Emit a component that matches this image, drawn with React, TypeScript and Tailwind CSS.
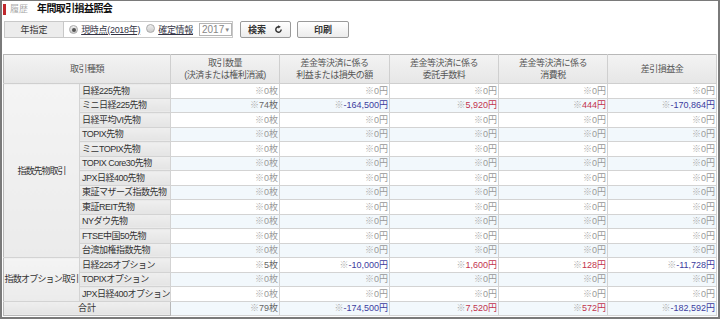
import React from "react";

type Amt = { v: string; c?: "blue" | "red" };

type Row = {
  name: string;
  qty: string;
  pl: Amt;
  fee: Amt;
  tax: Amt;
  net: Amt;
};

const zero: Amt = { v: "0" };

const zeroRow = (name: string): Row => ({
  name,
  qty: "0",
  pl: zero,
  fee: zero,
  tax: zero,
  net: zero,
});

const futures: Row[] = [
  zeroRow("日経225先物"),
  {
    name: "ミニ日経225先物",
    qty: "74",
    pl: { v: "-164,500", c: "blue" },
    fee: { v: "5,920", c: "red" },
    tax: { v: "444", c: "red" },
    net: { v: "-170,864", c: "blue" },
  },
  zeroRow("日経平均VI先物"),
  zeroRow("TOPIX先物"),
  zeroRow("ミニTOPIX先物"),
  zeroRow("TOPIX Core30先物"),
  zeroRow("JPX日経400先物"),
  zeroRow("東証マザーズ指数先物"),
  zeroRow("東証REIT先物"),
  zeroRow("NYダウ先物"),
  zeroRow("FTSE中国50先物"),
  zeroRow("台湾加権指数先物"),
];

const options: Row[] = [
  {
    name: "日経225オプション",
    qty: "5",
    pl: { v: "-10,000", c: "blue" },
    fee: { v: "1,600", c: "red" },
    tax: { v: "128", c: "red" },
    net: { v: "-11,728", c: "blue" },
  },
  zeroRow("TOPIXオプション"),
  zeroRow("JPX日経400オプション"),
];

const total: Row = {
  name: "合計",
  qty: "79",
  pl: { v: "-174,500", c: "blue" },
  fee: { v: "7,520", c: "red" },
  tax: { v: "572", c: "red" },
  net: { v: "-182,592", c: "blue" },
};

const Qty = ({ v }: { v: string }) => (
  <span className={v === "0" ? "text-[#999]" : "text-[#666]"}>
    <span className="text-[#aaa]">※</span>
    {v}枚
  </span>
);

const Yen = ({ a }: { a: Amt }) => {
  const color =
    a.c === "blue" ? "text-[#3b3b9e]" : a.c === "red" ? "text-[#c2334d]" : "text-[#999]";
  return (
    <span className={color}>
      <span className="text-[#aaa]">※</span>
      {a.v}円
    </span>
  );
};

const numCell = "border-r border-b border-[#d3d3d3] pr-[1px] text-right";
const nameCell =
  "overflow-hidden border-r border-b border-[#d3d3d3] bg-gradient-to-b from-[#efefef] to-[#e4e4e4] pl-[2px] text-left tracking-[-0.5px] text-[#333]";
const headCell = "border-r border-b border-[#cfcfcf] font-normal";

const DataCells = ({ r, i }: { r: Row; i: number }) => {
  const bg = i % 2 === 1 ? "bg-[#f2f8fc]" : "bg-white";
  return (
    <>
      <td className={`${numCell} ${bg}`}>
        <Qty v={r.qty} />
      </td>
      <td className={`${numCell} ${bg}`}>
        <Yen a={r.pl} />
      </td>
      <td className={`${numCell} ${bg}`}>
        <Yen a={r.fee} />
      </td>
      <td className={`${numCell} ${bg}`}>
        <Yen a={r.tax} />
      </td>
      <td className={`${numCell} ${bg}`}>
        <Yen a={r.net} />
      </td>
    </>
  );
};

const Radio = ({ on }: { on?: boolean }) => (
  <span className="inline-flex h-[9px] w-[9px] shrink-0 items-center justify-center rounded-full border border-[#aaa] bg-gradient-to-b from-[#eee] to-[#ccc]">
    {on && <span className="h-[4px] w-[4px] rounded-full bg-[#555]" />}
  </span>
);

export default function App() {
  return (
    <div
      className="h-[319px] w-[720px] overflow-hidden whitespace-nowrap border-x-2 border-t border-b-2 border-[#7a7a7a] bg-white text-[9px] leading-[12px]"
      style={{ fontFamily: '"Liberation Sans", "Noto Sans CJK JP", sans-serif' }}
    >
      {/* title */}
      <div className="flex h-[14px] items-center pl-[1px] pt-[2px]">
        <span className="h-[11px] w-[3px] bg-[#c0282d]" />
        <span className="ml-[4px] text-[#aaa]">履歴</span>
        <span className="ml-[9px] text-[10px] font-bold tracking-[-0.6px] text-[#111]">年間取引損益照会</span>
      </div>

      {/* filter */}
      <div className="mt-[6px] flex h-[17px] items-stretch pl-[2px]">
        <div className="flex w-[229px] items-stretch border border-[#c8c8c8]">
          <div className="flex w-[66px] items-center justify-center border-r border-[#c8c8c8] bg-[#ececec] text-[#333]">
            年指定
          </div>
          <div className="flex flex-1 items-center pl-[5px] tracking-[-0.3px] text-[#334]">
            <Radio on />
            <span className="ml-[3px] underline">現時点(2018年)</span>
            <span className="ml-[6px]">
              <Radio />
            </span>
            <span className="ml-[3px] underline">確定情報</span>
            <span className="ml-[6px] flex h-[13px] w-[33px] items-center justify-between border border-[#b5b5b5] pl-[2px] pr-[2px] tracking-normal text-[#888]">
              <span className="text-[10px]">2017</span>
              <span className="text-[6px]">▼</span>
            </span>
          </div>
        </div>
        <button className="ml-[7px] flex w-[51px] items-center justify-center gap-[8px] rounded-[2px] border border-[#9a9a9a] bg-gradient-to-b from-white to-[#ececec] font-bold text-[#333]">
          <span>検索</span>
          <svg width="9" height="9" viewBox="0 0 10 10">
            <path d="M8 5 A3 3 0 1 1 5.5 2" fill="none" stroke="#333" strokeWidth="1.6" />
            <path d="M4.5 0.3 L7.6 2 L4.8 3.9 Z" fill="#333" />
          </svg>
        </button>
        <button className="ml-[6px] flex w-[52px] items-center justify-center rounded-[2px] border border-[#9a9a9a] bg-gradient-to-b from-white to-[#ececec] font-bold text-[#333]">
          印刷
        </button>
      </div>

      {/* table */}
      <div className="mt-[16px] pl-[1px]">
        <table className="w-[713px] table-fixed border-collapse border-l border-t border-[#b8b8b8]">
          <colgroup>
            <col className="w-[76px]" />
            <col className="w-[91px]" />
            <col className="w-[109px]" />
            <col className="w-[110px]" />
            <col className="w-[109px]" />
            <col className="w-[109px]" />
            <col className="w-[109px]" />
          </colgroup>
          <thead>
            <tr className="h-[29px] bg-gradient-to-b from-[#f3f3f3] to-[#e6e6e6] text-center tracking-[-0.5px] text-[#555]">
              <th colSpan={2} className={headCell}>
                取引種類
              </th>
              <th className={headCell}>
                取引数量
                <br />
                (決済または権利消滅)
              </th>
              <th className={headCell}>
                差金等決済に係る
                <br />
                利益または損失の額
              </th>
              <th className={headCell}>
                差金等決済に係る
                <br />
                委託手数料
              </th>
              <th className={headCell}>
                差金等決済に係る
                <br />
                消費税
              </th>
              <th className={headCell}>差引損益金</th>
            </tr>
          </thead>
          <tbody>
            {futures.map((r, i) => (
              <tr key={r.name} className="h-[14.5px]">
                {i === 0 && (
                  <td
                    rowSpan={futures.length}
                    className="border-r border-b border-[#d3d3d3] bg-gradient-to-b from-[#f4f4f4] to-[#ebebeb] text-center tracking-[-1px] text-[#333]"
                  >
                    指数先物取引
                  </td>
                )}
                <td className={nameCell}>{r.name}</td>
                <DataCells r={r} i={i} />
              </tr>
            ))}
            {options.map((r, i) => (
              <tr key={r.name} className="h-[14.5px]">
                {i === 0 && (
                  <td
                    rowSpan={options.length}
                    className="overflow-hidden border-r border-b border-[#d3d3d3] bg-gradient-to-b from-[#f4f4f4] to-[#ebebeb] text-center tracking-[-0.8px] text-[#333]"
                  >
                    指数オプション取引
                  </td>
                )}
                <td className={nameCell}>{r.name}</td>
                <DataCells r={r} i={i + futures.length} />
              </tr>
            ))}
            <tr className="h-[14.5px]">
              <td
                colSpan={2}
                className="border-r border-b border-[#b8b8b8] bg-gradient-to-b from-[#efefef] to-[#e4e4e4] text-center text-[#333]"
              >
                {total.name}
              </td>
              <DataCells r={total} i={15} />
            </tr>
          </tbody>
        </table>
      </div>
    </div>
  );
}
